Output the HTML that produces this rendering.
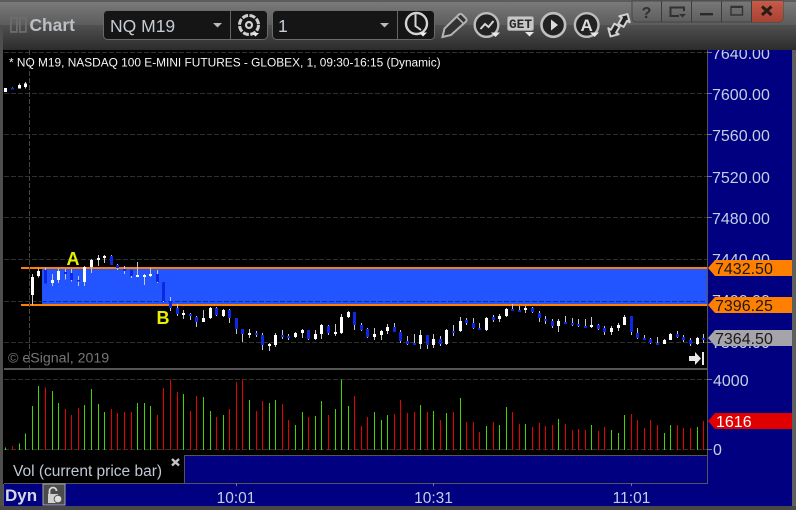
<!DOCTYPE html>
<html><head><meta charset="utf-8"><title>Chart</title>
<style>
html,body{margin:0;padding:0;background:#444;width:796px;height:510px;overflow:hidden}
svg{display:block;font-family:"Liberation Sans",sans-serif}
.c{shape-rendering:crispEdges;fill:none}
.w{stroke:#c8c8c8;stroke-width:3}
.bw{stroke:#fff;stroke-width:9}
.bb{stroke:#0c28e4;stroke-width:9}
.g{stroke:#44d400;stroke-width:3}
.r{stroke:#e80000;stroke-width:3}
.ax{font-size:16px;fill:#c4d0e2}
.tag{font-size:16px;fill:#1a1a1a}
.ic{fill:#222;stroke:#bdbdbd;stroke-width:2.4}
.tri{fill:#e8e8e8}
</style></head><body>
<svg width="796" height="510" viewBox="0 0 796 510" xmlns="http://www.w3.org/2000/svg">
<defs>
<linearGradient id="t1" x1="0" y1="0" x2="0" y2="1"><stop offset="0" stop-color="#7c7c7c"/><stop offset="1" stop-color="#5c5c5c"/></linearGradient>
<linearGradient id="t2" x1="0" y1="0" x2="0" y2="1"><stop offset="0" stop-color="#505050"/><stop offset="1" stop-color="#2c2c2c"/></linearGradient>
<linearGradient id="b1" x1="0" y1="0" x2="0" y2="1"><stop offset="0" stop-color="#787878"/><stop offset="1" stop-color="#5e5e5e"/></linearGradient>
<linearGradient id="x1" x1="0" y1="0" x2="0" y2="1"><stop offset="0" stop-color="#c85a48"/><stop offset="1" stop-color="#a84232"/></linearGradient>
</defs>

<!-- window frame -->
<rect width="796" height="510" fill="#555"/>
<rect x="0" y="0" width="796" height="25" fill="url(#t1)"/>
<rect x="0" y="25" width="796" height="25" fill="url(#t2)"/>
<rect x="0" y="0" width="796" height="2" fill="#5c5c5c"/>
<rect x="0" y="25" width="3" height="485" fill="#4e4e4e"/>
<rect x="792" y="50" width="4" height="460" fill="#5e5e5e"/>

<!-- toolbar left -->
<g fill="none" stroke="#6c6c6c" stroke-width="1.8"><rect x="10.9" y="17.9" width="6" height="14"/><rect x="19.9" y="17.9" width="6" height="14"/></g>
<text x="29.5" y="31" font-size="17.4" font-weight="bold" fill="#bcc0c4">Chart</text>

<!-- symbol combo -->
<rect x="103.5" y="10.5" width="164" height="29" rx="4" fill="#151515" stroke="#6a6a6a"/>
<path d="M230.5 11V39" stroke="#666"/>
<text x="110" y="32" font-size="17.5" fill="#c4ccd4">NQ M19</text>
<path d="M213 23h9l-4.500 4.500z" fill="#bbb"/>
<!-- gear -->
<g fill="none" stroke="#d0d0d0">
<circle cx="249" cy="25" r="9.500" stroke-width="3" stroke-dasharray="6 1.500"/>
<circle cx="249" cy="25" r="3" stroke-width="2.200"/>
</g>
<path d="M252 33h7l-3.500 3.500z" fill="#e8e8e8"/>

<!-- interval combo -->
<rect x="272.5" y="10.5" width="162" height="29" rx="4" fill="#151515" stroke="#6a6a6a"/>
<path d="M397.500 11V39" stroke="#666"/>
<text x="278" y="32" font-size="17.5" fill="#c4ccd4">1</text>
<path d="M380 23h9l-4.500 4.500z" fill="#bbb"/>
<circle cx="416.500" cy="23.500" r="10.500" fill="none" stroke="#d4d4d4" stroke-width="2.400"/>
<path d="M415.500 14.500V26L421 30" fill="none" stroke="#d4d4d4" stroke-width="2"/>
<path d="M419 32.500h8l-4 4z" fill="#f0f0f0"/>

<!-- pencil -->
<path d="M442.500 37l2-8.500L459 14.500a2.200 2.200 0 0 1 3 0l4 4a2.200 2.200 0 0 1 0 3L451 35z" fill="#333" stroke="#b4b4b4" stroke-width="2"/>
<path d="M457 17l6 6" stroke="#b4b4b4" stroke-width="1.600"/>
<!-- chart circle -->
<circle cx="486.500" cy="25" r="11.800" class="ic"/>
<path d="M480.500 29l4.500-5 3.500 3 5-6" fill="none" stroke="#d8d8d8" stroke-width="2"/>
<path d="M491 32.500h9l-4.500 4.500z" class="tri"/>
<!-- GET -->
<rect x="507.500" y="16.500" width="26" height="14" rx="2" fill="#c8c8c8" stroke="#9a9a9a"/>
<text x="509" y="28" font-size="13" font-weight="bold" font-family="Liberation Mono" fill="#2a2a2a" textLength="23" lengthAdjust="spacingAndGlyphs">GET</text>
<path d="M525 32h9l-4.500 4.500z" class="tri"/>
<!-- play -->
<circle cx="553.300" cy="25" r="11.800" fill="#222" stroke="#c0c0c0" stroke-width="2.600"/>
<path d="M551 19.500L558 25l-7 5.500z" fill="#dcdcdc"/>
<!-- A -->
<circle cx="586.700" cy="25" r="11.800" class="ic"/>
<text x="586.700" y="31" font-size="17" font-weight="bold" text-anchor="middle" fill="#dcdcdc">A</text>
<path d="M590 32.500h9l-4.500 4.500z" class="tri"/>
<!-- swap arrows -->
<g fill="#222" stroke="#d0d0d0" stroke-width="2" stroke-linejoin="round">
<path transform="translate(623.500 21) rotate(30)" d="M0-8L6-2H3V5H-3V-2H-6z"/>
<path transform="translate(614.500 29.500) rotate(30)" d="M0 8L6 2H3V-5H-3V2H-6z"/>
</g>

<!-- window buttons -->
<path d="M632 1H783V18a4 4 0 0 1-4 4H636a4 4 0 0 1-4-4z" fill="url(#b1)" stroke="#3e3e3e" stroke-width=".8"/>
<path d="M752 1H783V18a4 4 0 0 1-4 4H752z" fill="url(#x1)"/>
<path d="M661.500 1V22M691.500 1V22M721.500 1V22M751.500 1V22" stroke="#3c3c3c"/>
<text x="646.500" y="18" font-size="16" font-weight="bold" text-anchor="middle" fill="#303030">?</text>
<path d="M679 16h-8.500V7.500h13.500V11" fill="none" stroke="#303030" stroke-width="2"/>
<path d="M679 14h7l-3.500 3.500z" fill="#303030"/>
<path d="M700 13h13v2.400h-13z" fill="#2a2a2a"/>
<path d="M731 6.500h11.500v8.500H731z" fill="none" stroke="#333" stroke-width="1.400"/><path d="M731 6h12v2h-12z" fill="#333"/>
<path d="M762 6.500l9.500 8.500M771.500 6.500L762 15" stroke="#2a1a18" stroke-width="3"/>

<!-- panels -->
<rect x="4" y="50" width="703" height="318" fill="#000"/>
<rect x="3" y="50" width="1" height="434" fill="#000"/>
<rect x="708" y="50" width="84" height="456" fill="#000080"/>
<rect x="707" y="50" width="1" height="434" fill="#555"/>
<rect x="4" y="368" width="704" height="2" fill="#555"/>
<rect x="4" y="370" width="703" height="85" fill="#000"/>
<rect x="4" y="455" width="181" height="29" fill="#000"/>
<rect x="185" y="456" width="522" height="27" fill="#000080"/>
<path d="M185 455.500H708M184.500 455V484M4 483.500H708" stroke="#555" fill="none"/>
<rect x="4" y="484" width="704" height="22" fill="#000080"/>

<!-- zone -->
<rect x="42" y="269" width="665" height="35" fill="#2255ff"/>
<rect x="21" y="267" width="686" height="2" fill="#ff7f00"/>
<rect x="21" y="304" width="686" height="2" fill="#ff7f00"/>

<!-- grid -->
<g class="c" stroke="#303030" stroke-dasharray="5 2">
<path d="M4 52.500H707M4 93.500H707M4 134.500H707M4 176.500H707M4 217.500H707M4 259.500H707M4 342.500H707M4 379.500H707M4 449.500H707"/>
<path d="M29.500 50V368" stroke="#444"/>
</g>
<path class="c" d="M42 301.500H707" stroke="#10308c" stroke-dasharray="5 2"/>
<path class="c" d="M4 301.500H42" stroke="#303030" stroke-dasharray="5 2"/>

<!-- candles -->
<g transform="translate(.17 0) scale(.33333)">
<path class="c w" d="M16 264V276M37 262V268M58 250V266M76 246V266"/>
<path class="c bw" d="M16 264V276M58 255V266M76 250V261"/>
<path class="c bb" d="M37 264V268"/>
</g>
<g transform="translate(.17 240) scale(.33333)">
<path class="c w" d="M97 102V195M115 85V112M136 82V130M157 102V138M175 85V129M196 87V118M214 87V125M235 108V138M253 78V138M274 57V99M295 45V78M313 45V69M334 45V75M352 72V90M373 78V102M394 90V114M412 66V111M433 102V135M451 84V111M472 90V129M490 126V186M511 171V213M532 192V228M550 210V237M571 219V240M589 228V261M610 210V246M631 201V237M649 201V228M670 207V231M688 207V249M709 234V282M727 267V306M748 267V294M769 273V291M787 279V330M808 309V333"/>
<path class="c bw" d="M97 111V165M115 93V108M157 120V129M175 93V120M253 81V126M274 60V81M295 54V60M313 48V54M412 105V111M433 105V111M451 102V108M550 219V225M610 234V246M631 204V234M670 210V228M748 279V285M808 312V318"/>
<path class="c bb" d="M136 90V130M196 96V102M214 99V120M235 120V125M334 48V75M352 75V84M373 87V93M394 90V108M472 102V126M490 126V183M511 183V204M532 204V222M571 222V228M589 231V246M649 204V225M688 210V234M709 234V267M727 267V282M769 279V285M787 285V315"/>
</g>
<g transform="translate(270.17 240) scale(.33333)">
<path class="c w" d="M16 279V321M37 270V297M55 282V300M76 276V294M97 267V294M115 270V300M136 270V300M154 252V297M175 255V285M196 252V288M214 222V282M235 213V234M253 216V270M274 249V273M292 264V294M313 264V300M334 270V300M352 252V282M373 249V276M391 270V309M412 288V315M433 282V315M451 270V327M472 285V327M490 282V324M511 288V318M529 267V315M550 255V288M571 231V276M589 234V255M610 234V267M628 249V270M649 231V273M670 225V246M688 222V246M709 204V231M727 192V213M748 198V216M766 198V219M787 201V219M808 213V246"/>
<path class="c bw" d="M16 285V315M76 279V291M97 270V279M136 282V297M154 255V282M196 276V282M214 231V279M235 216V231M313 282V291M334 273V285M352 261V273M451 285V312M490 297V315M529 270V312M571 243V273M649 234V270M688 228V237M709 207V228M766 204V210"/>
<path class="c bb" d="M37 285V291M55 288V294M115 270V297M175 258V279M253 216V255M274 255V270M292 267V291M373 261V276M391 276V303M412 303V312M433 309V315M472 285V315M511 297V312M550 273V279M589 240V249M610 249V264M628 264V270M670 231V240M727 207V213M748 210V216M787 204V216M808 219V234"/>
</g>
<g transform="translate(526.17 240) scale(.33333)">
<path class="c w" d="M58 228V252M79 237V264M97 237V276M118 228V252M139 234V258M157 237V261M178 237V264M196 231V264M217 252V270M235 258V285M256 258V285M277 249V273M295 225V255M316 228V285M334 264V297M355 285V300M373 294V312M394 291V315M415 297V312M433 279V300M454 273V294M472 285V306M493 294V318M514 291V315M532 282V309"/>
<path class="c bw" d="M97 243V258M196 255V261M256 264V276M277 255V264M295 231V255M415 300V312M433 282V300M514 294V312"/>
<path class="c bb" d="M58 237V243M79 243V258M118 246V252M139 249V255M157 252V258M178 258V264M217 255V267M235 264V276M316 228V276M334 279V294M355 294V300M373 297V309M394 309V315M454 282V291M472 291V300M493 300V312M532 294V300"/>
</g>

<!-- volume bars -->
<g transform="translate(.17 370) scale(.33333)">
<path class="c g" d="M16 240V232M58 240V220M76 240V190M97 240V108M115 240V48M157 240V63M175 240V99M253 240V105M274 240V57M295 240V102M313 240V126M412 240V99M433 240V99M451 240V108M550 240V72M610 240V81M631 240V123M670 240V135M748 240V90M808 240V99"/>
<path class="c r" d="M37 240V228M136 240V52M196 240V117M214 240V135M235 240V114M334 240V117M352 240V129M373 240V126M394 240V126M472 240V135M490 240V54M511 240V28M532 240V66M571 240V123M589 240V78M649 240V141M688 240V117M709 240V36M727 240V28M769 240V123M787 240V93"/>
</g>
<g transform="translate(270.17 370) scale(.33333)">
<path class="c g" d="M16 240V90M76 240V165M97 240V126M136 240V138M154 240V93M196 240V117M214 240V28M235 240V108M313 240V126M334 240V150M352 240V135M451 240V105M490 240V123M529 240V129M571 240V84M649 240V168M688 240V165M709 240V111M766 240V162"/>
<path class="c r" d="M37 240V102M55 240V150M115 240V141M175 240V135M253 240V78M274 240V168M292 240V141M373 240V132M391 240V90M412 240V129M433 240V126M472 240V126M511 240V150M550 240V126M589 240V156M610 240V156M628 240V186M670 240V156M727 240V126M748 240V162M787 240V171M808 240V159"/>
</g>
<g transform="translate(526.17 370) scale(.33333)">
<path class="c g" d="M97 240V147M196 240V165M256 240V180M277 240V189M295 240V135M415 240V189M433 240V165M514 240V171"/>
<path class="c r" d="M58 240V168M79 240V165M118 240V162M139 240V180M157 240V177M178 240V180M217 240V183M235 240V171M316 240V132M334 240V150M355 240V174M373 240V150M394 240V165M454 240V165M472 240V174M493 240V174M532 240V153"/>
</g>

<!-- chart texts -->
<text x="9" y="66.500" font-size="11.89" fill="#f4f6fa">* NQ M19, NASDAQ 100 E-MINI FUTURES - GLOBEX, 1, 09:30-16:15 (Dynamic)</text>
<text x="66.500" y="265" font-size="18" font-weight="bold" fill="#e6f000">A</text>
<text x="156.500" y="324" font-size="18" font-weight="bold" fill="#e6f000">B</text>
<text x="8" y="362.500" font-size="14.200" fill="#767676">© eSignal, 2019</text>
<path d="M689 356h6v-4l6 6.500-6 6.500v-4h-6z" fill="#e8e8e8"/><rect x="702" y="352" width="2" height="13" fill="#e8e8e8"/>

<!-- axis labels -->
<path d="M707 52.500h5M707 93.500h5M707 134.500h5M707 176.500h5M707 217.500h5M707 342.500h5M707 379.500h5M707 449.500h5" stroke="#777"/>
<svg x="708" y="50" width="84" height="406" overflow="hidden">
<g class="ax" transform="translate(-708 -50)">
<text x="712" y="59">7640.00</text><text x="712" y="100">7600.00</text><text x="712" y="141">7560.00</text><text x="712" y="183">7520.00</text><text x="712" y="224">7480.00</text><text x="712" y="265">7440.00</text><text x="712" y="306">7400.00</text><text x="712" y="348">7360.00</text>
<text x="713" y="386">4000</text><text x="713" y="455">0</text>
</g></svg>
<path d="M708 268l7-8h77v16h-77z" fill="#ff7f00"/>
<path d="M708 305l7-8h77v16h-77z" fill="#ff7f00"/>
<path d="M708 338l7-8h77v16h-77z" fill="#a4a4aa"/>
<path d="M708 421l7-8h77v16h-77z" fill="#e00000"/>
<text class="tag" x="715" y="274">7432.50</text>
<text class="tag" x="715" y="311">7396.25</text>
<text class="tag" x="715" y="344">7364.50</text>
<text x="716" y="427" font-size="16" fill="#fff">1616</text>

<!-- vol legend -->
<text x="13" y="476" font-size="15.500" fill="#c0c8d4">Vol (current price bar)</text>
<path d="M172 459l7 6.500M179 459l-7 6.500" stroke="#c4c4c4" stroke-width="2.400"/>

<!-- bottom bar -->
<text x="5" y="501" font-size="17" font-weight="bold" fill="#d4d8e4">Dyn</text>
<rect x="43" y="484" width="22" height="21" fill="#4c4c4c" stroke="#a8a8a8" stroke-width="1"/>
<path d="M49.500 494v-3a3.500 3.500 0 0 1 7 0" fill="none" stroke="#d8d8d8" stroke-width="1.800"/>
<rect x="48" y="494" width="10" height="9" fill="#d0d0d0"/>
<circle cx="58" cy="499" r="3.800" fill="#e0e0e0" stroke="#555"/>
<path d="M236.500 483v3M433.500 483v3M631.500 483v3" stroke="#777"/>
<g font-size="15.500" fill="#c4d0e2" text-anchor="middle"><text x="236" y="503">10:01</text><text x="433.500" y="503">10:31</text><text x="631.500" y="503">11:01</text></g>
<rect x="0" y="506" width="796" height="4" fill="#484848"/>
</svg>
</body></html>
